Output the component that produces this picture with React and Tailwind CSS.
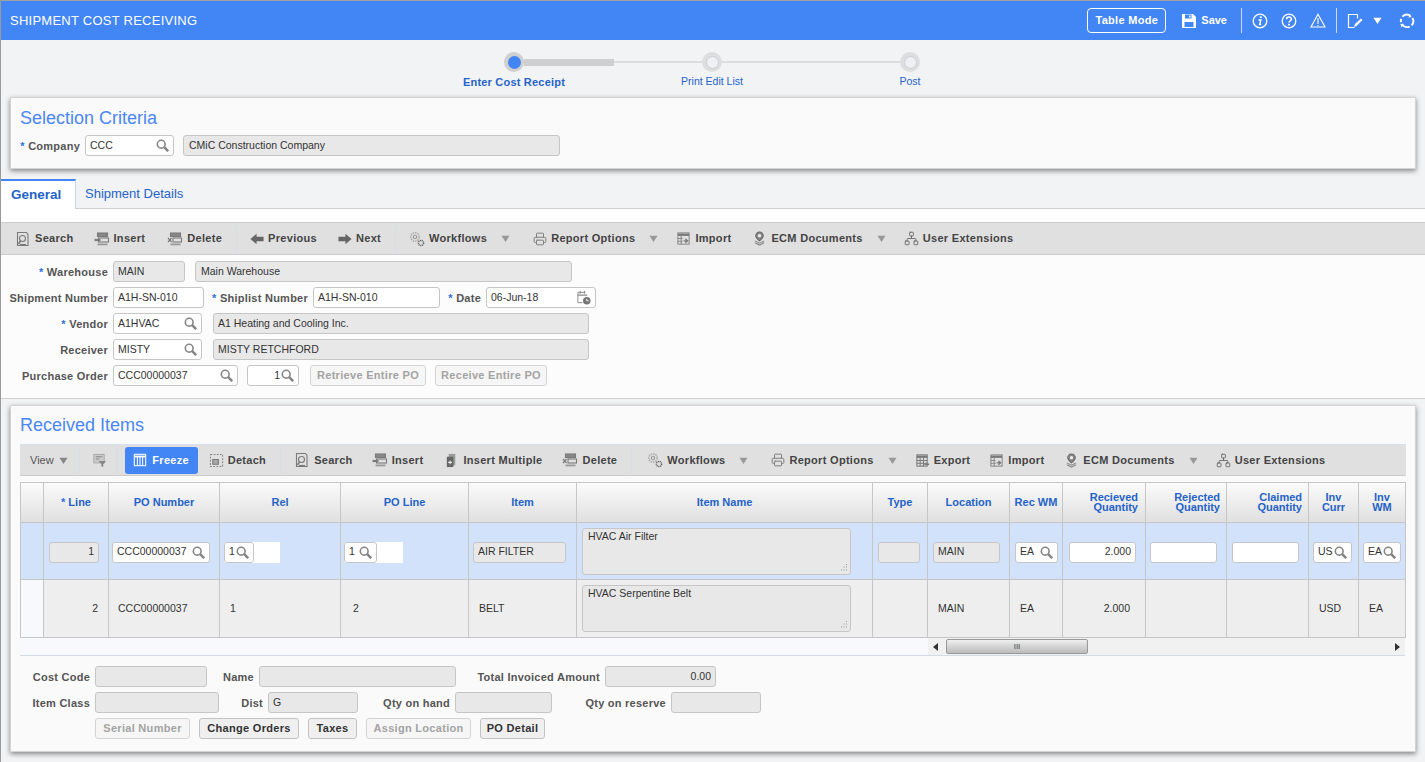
import { Printer, Network } from "lucide-react";

const gray = "#7a7a7a";

function Glyph({ size = 16, children }) {
  return (
    <svg width={size} height={size} viewBox="0 0 16 16" fill="none" stroke={gray} strokeWidth="1.1" className="shrink-0">
      {children}
    </svg>
  );
}

// toolbar icons
const icons = {
  search: (
    <Glyph>
      <path d="M2.5 1.5h9l1.5 2v11H2.5z" />
      <circle cx="7.5" cy="7.5" r="3" />
      <path d="M5.5 10 3.5 13" strokeWidth="1.6" />
      <path d="M5 13.5h6" />
    </Glyph>
  ),
  insert: (
    <Glyph>
      <rect x="3.5" y="2" width="10" height="3.5" fill="#888" />
      <rect x="4.5" y="7" width="10" height="4" />
      <path d="M0.5 9h6" strokeWidth="2.2" />
      <rect x="3.5" y="12.5" width="10" height="1.8" fill="#999" stroke="none" />
    </Glyph>
  ),
  delete: (
    <Glyph>
      <rect x="3.5" y="2" width="10" height="3.5" fill="#888" />
      <rect x="6" y="7" width="8.5" height="4" />
      <path d="m1 7 3.5 4m0-4-3.5 4" strokeWidth="1.2" />
      <rect x="3.5" y="12.5" width="10" height="1.8" fill="#999" stroke="none" />
    </Glyph>
  ),
  prev: (
    <Glyph size={14}>
      <path d="M0.5 8 7.5 2V5.5H15.5v5H7.5V14z" fill="#666" stroke="none" />
    </Glyph>
  ),
  next: (
    <Glyph size={14}>
      <path d="M15.5 8 8.5 2V5.5H0.5v5h8V14z" fill="#666" stroke="none" />
    </Glyph>
  ),
  workflows: (
    <Glyph>
      <circle cx="6" cy="6" r="4.2" strokeDasharray="1.6 .8" strokeWidth="1.5" stroke="#aaa" />
      <circle cx="6" cy="6" r="1.7" stroke="#999" />
      <circle cx="12" cy="12" r="2.6" strokeDasharray="1.2 .6" strokeWidth="1.5" stroke="#666" />
    </Glyph>
  ),
  print: <Printer size={14} color="#808080" strokeWidth={1.7} className="shrink-0" />,
  import: (
    <Glyph size={15}>
      <rect x="2" y="2" width="12" height="12" stroke="#888" />
      <path d="M2 4h12" strokeWidth="2.4" stroke="#777" />
      <path d="M5.5 5v9M2 8h5M2 11h5" stroke="#888" />
      <path d="M8 10.5h4m-2-2 2.5 2-2.5 2" strokeWidth="1.3" />
    </Glyph>
  ),
  export: (
    <Glyph size={15}>
      <rect x="2" y="2" width="11" height="12" stroke="#777" />
      <path d="M2 4h11" strokeWidth="2.4" stroke="#777" />
      <path d="M5.5 5v9M9 5v9M2 8h11M2 11h11" />
      <path d="M10 12h5" strokeWidth="1.8" />
    </Glyph>
  ),
  ecm: (
    <Glyph size={15}>
      <path d="M8 10.5C5 8 4 6.8 4 5a4 4 0 0 1 8 0c0 1.8-1 3-4 5.5z" fill="#888" stroke="#666" />
      <circle cx="8" cy="5" r="1.7" fill="#eee" stroke="none" />
      <path d="M3 10.5 8 13l5-2.5M3 12.5 8 15l5-2.5" stroke="#888" />
    </Glyph>
  ),
  users: <Network size={15} color="#666" strokeWidth={1.4} className="shrink-0" />,
  filter: (
    <Glyph size={15}>
      <rect x="2" y="1.5" width="11" height="9" fill="#ccc" stroke="#aaa" />
      <path d="M4 4h7M4 6.5h4" stroke="#888" />
      <path d="M7 8.5h8l-3 3.5v3l-2-1v-2z" fill="#888" stroke="none" />
    </Glyph>
  ),
  freeze: (
    <svg width="14" height="14" viewBox="0 0 16 16" fill="none" stroke="#fff" strokeWidth="1.2" className="shrink-0">
      <rect x="1.5" y="1.5" width="13" height="13" />
      <path d="M1.5 4h13" strokeWidth="2" />
      <path d="M5 4v10M8 4v10M11 4v10" />
    </svg>
  ),
  detach: (
    <Glyph size={15}>
      <rect x="1.5" y="1.5" width="13" height="13" strokeDasharray="2 1.4" stroke="#888" />
      <rect x="4" y="7" width="6" height="5" fill="#aaa" stroke="#777" />
    </Glyph>
  ),
  multi: (
    <Glyph size={15}>
      <path d="M5 1h7v12H5z" fill="#999" stroke="none" />
      <path d="M3 4h7v11H3z" fill="#666" stroke="none" />
      <path d="M6.5 8v4M4.5 10h4" stroke="#eee" />
    </Glyph>
  ),
};

function Caret({ color = "#999", size = 9 }) {
  return (
    <svg width={size} height={size} viewBox="0 0 10 10" className="shrink-0">
      <path d="M0.5 2h9L5 9z" fill={color} />
    </svg>
  );
}

function Tool({ icon, label, ml = "" }) {
  return (
    <div className={`flex items-center gap-[4px] text-[11px] font-bold tracking-[0.3px] text-[#444] whitespace-nowrap ${ml}`}>
      {icons[icon]}
      <span>{label}</span>
    </div>
  );
}

function Sep() {
  return <div className="w-px h-[26px] bg-[#d6dde6] shrink-0" />;
}

function Mag() {
  return (
    <svg width="13" height="13" viewBox="0 0 13 13" fill="none" stroke="#858585" className="shrink-0">
      <circle cx="5.2" cy="5.2" r="3.9" strokeWidth="1.6" />
      <path d="m8.2 8.2 4 4" strokeWidth="2.5" />
    </svg>
  );
}

function Field({ w, value = "", ro, search, right, children }) {
  return (
    <div
      className={`${w} h-[21px] shrink-0 flex items-center gap-[1px] rounded-[3px] border border-[#c6c6c6] pl-[4px] pr-[4px] text-[10.5px] text-[#333] whitespace-nowrap overflow-hidden ${ro ? "bg-[#e8e8e8]" : "bg-white"}`}
    >
      <span className={`flex-1 min-w-0 overflow-hidden ${right ? "text-right" : ""}`}>{value}</span>
      {search && <Mag />}
      {children}
    </div>
  );
}

function Label({ w, star, children }) {
  return (
    <div className={`${w} shrink-0 pt-[2px] text-right text-[11px] font-bold tracking-[0.25px] text-[#555] whitespace-nowrap`}>
      {star && <span className="text-[#2f6fdc]">* </span>}
      {children}
    </div>
  );
}

function Btn({ w, on, children }) {
  return (
    <div
      className={`${w} h-[21px] shrink-0 flex items-center justify-center rounded-[3px] border text-[11px] font-bold tracking-[0.3px] whitespace-nowrap ${
        on ? "border-[#c2c2c2] bg-[#efefef] text-[#333]" : "border-[#d4d4d4] bg-[#f6f6f6] text-[#a3a3a3]"
      }`}
    >
      {children}
    </div>
  );
}

const cols = [23, 65, 111, 121, 128, 108, 296, 55, 82, 53, 83, 81, 82, 50, 47];

const heads = [
  "",
  <><span className="text-[#2f6fdc]">* </span>Line</>,
  "PO Number",
  "Rel",
  "PO Line",
  "Item",
  "Item Name",
  "Type",
  "Location",
  "Rec WM",
  <div className="text-right pr-[3px]">Recieved<br />Quantity</div>,
  <div className="text-right pr-[2px]">Rejected<br />Quantity</div>,
  <div className="text-right pr-[2px]">Claimed<br />Quantity</div>,
  <>Inv<br />Curr</>,
  <>Inv<br />WM</>,
];

function Cell({ children, cls = "", freeze }) {
  return (
    <td className={`border border-[#c6c6c6] px-[5px] p-0 ${freeze ? "border-l-[#4a7fd8]" : ""} ${cls}`}>{children}</td>
  );
}

function TextArea({ value }) {
  return (
    <div className="relative w-[269px] h-[47px] rounded-[3px] border border-[#c6c6c6] bg-[#e8e8e8] px-[5px] text-[10.5px] text-[#333]">
      {value}
      <svg width="9" height="9" viewBox="0 0 9 9" className="absolute right-[2px] bottom-[2px]">
        <path d="M7.5 1v1M5 3.5v1M7.5 3.5v1M2.5 6.5v1M5 6.5v1M7.5 6.5v1" stroke="#999" />
      </svg>
    </div>
  );
}

function StepDot({ active }) {
  return (
    <div className={`w-5 h-5 shrink-0 rounded-full flex items-center justify-center ${active ? "bg-[#d0d0d0]" : "bg-[#dedede]"}`}>
      <div className={`w-[13px] h-[13px] rounded-full ${active ? "bg-[#4285f4]" : "bg-[#eef0f3] border border-[#c8ced8]"}`} />
    </div>
  );
}

export default function App() {
  return (
    <div className="w-[1425px] h-[762px] overflow-hidden bg-[#f2f3f5] border-l border-[#9a9a9a] font-['Liberation_Sans',Arial,sans-serif]">
      {/* Header */}
      <div className="h-[40px] border-t border-[#a0a0a0] bg-[#4285f4] flex items-center pl-[9px] text-white">
        <div className="text-[13px] tracking-[0.25px]">SHIPMENT COST RECEIVING</div>
        <div className="ml-auto flex items-center pr-[10px]">
          <div className="w-[79px] h-[25px] flex items-center justify-center rounded-[4px] border border-white text-[11px] font-bold tracking-[0.3px]">
            Table Mode
          </div>
          <svg width="16" height="16" viewBox="0 0 16 16" className="ml-[15px]">
            <path d="M1 1h11l3 3v11H1z" fill="#fff" />
            <path d="M4 1.5h6.5v4H4z" fill="#4285f4" />
            <path d="M8 2.5h1.5v2H8z" fill="#fff" />
            <path d="M3.5 9h9v5h-9z" fill="#4285f4" />
          </svg>
          <div className="ml-[4px] text-[11px] font-bold">Save</div>
          <div className="ml-[14px] w-px h-[25px] bg-[#c9dbfb]" />
          <svg width="16" height="16" viewBox="0 0 16 16" fill="none" stroke="#fff" className="ml-[10px]">
            <circle cx="8" cy="8" r="6.8" strokeWidth="1.3" />
            <path d="M8.8 3.4v1.6" strokeWidth="2" />
            <path d="M6.6 7h2.2l-1.1 4.6h1.5" strokeWidth="1.5" />
          </svg>
          <svg width="16" height="16" viewBox="0 0 16 16" fill="none" stroke="#fff" className="ml-[13px]">
            <circle cx="8" cy="8" r="6.8" strokeWidth="1.3" />
            <path d="M5.6 6.2C5.7 3.4 10.4 3.4 10.4 6c0 1.8-2.4 1.8-2.4 3.6" strokeWidth="1.6" />
            <path d="M8 10.8v1.7" strokeWidth="1.8" />
          </svg>
          <svg width="16" height="15" viewBox="0 0 16 15" fill="none" stroke="#fff" strokeWidth="1.1" className="ml-[13px]">
            <path d="M8 1.2 15 14H1z" />
            <path d="M8 5v6" />
            <path d="M8 12v1" />
          </svg>
          <div className="ml-[10px] w-px h-[25px] bg-[#c9dbfb]" />
          <svg width="16" height="16" viewBox="0 0 16 16" fill="none" stroke="#fff" className="ml-[10px]">
            <path d="M10.5 1.5H1.5v13h6" strokeWidth="1.2" />
            <path d="M10.5 1.5v4" strokeWidth="1.2" />
            <path d="m7 14 1-3 6-5.5 1.5 1.5L9.5 13z" fill="#fff" stroke="none" />
          </svg>
          <div className="ml-[10px]">
            <Caret color="#fff" size={9} />
          </div>
          <svg width="16" height="16" viewBox="0 0 16 16" fill="none" stroke="#fff" strokeWidth="2" className="ml-[17px]">
            <path d="M3.4 3.6A6.2 6.2 0 0 1 11 2.6" />
            <path d="M13.4 5a6.2 6.2 0 0 1-.8 7.4" />
            <path d="M10.6 13.6A6.2 6.2 0 0 1 3 11.2" />
            <path d="M2 9.2a6.2 6.2 0 0 1 .2-3.4" />
            <path d="M11 1l1.6 3L9.4 4.4z" fill="#fff" stroke="none" />
            <path d="M2.6 14.6 1.4 11l3.4-.2z" fill="#fff" stroke="none" />
          </svg>
        </div>
      </div>

      {/* Wizard */}
      <div className="h-[57px] pl-[503px] pt-[12px]">
        <div className="flex items-center w-[416px]">
          <StepDot active />
          <div className="w-[90px] h-[7px] bg-[#cfcfcf]" />
          <div className="w-[88px] h-[2px] bg-[#dcdcdc]" />
          <StepDot />
          <div className="w-[178px] h-[2px] bg-[#dcdcdc]" />
          <StepDot />
        </div>
        <div className="-ml-[89px] mt-[2px] grid grid-cols-[198px_198px_198px] text-center text-[10.5px] text-[#2563c9]">
          <div className="font-bold text-[11px] tracking-[0.2px]">Enter Cost Receipt</div>
          <div>Print Edit List</div>
          <div>Post</div>
        </div>
      </div>

      {/* Selection Criteria */}
      <div className="mx-[9px] h-[72px] border border-[#d4d4d4] bg-[#fafafa] shadow-[0_2px_5px_rgba(0,0,0,0.45)] pl-[9px] pt-[9px]">
        <div className="text-[18px] leading-[22px] text-[#4a86f7]">Selection Criteria</div>
        <div className="mt-[6px] flex items-center">
          <Label w="w-[60px]" star>Company</Label>
          <div className="w-[5px]" />
          <Field w="w-[89px]" value="CCC" search />
          <div className="w-[9px]" />
          <Field w="w-[377px] !pl-[5px]" value="CMiC Construction Company" ro />
        </div>
      </div>

      {/* Tabs */}
      <div className="mt-[10px] h-[30px] flex border-b border-[#cfcfcf] text-[13px]">
        <div className="w-[75px] h-[30px] border-t-2 border-r border-t-[#4285f4] border-r-[#c9d6ea] bg-white flex items-center pl-[10px] text-[13.5px] font-bold text-[#2563c9]">
          General
        </div>
        <div className="pl-[9px] flex items-center text-[#2563c9]">Shipment Details</div>
      </div>
      <div className="h-[13px] bg-white" />

      {/* Main toolbar */}
      <div className="h-[33px] pl-[14px] flex items-center border-y border-[#cdcdcd] bg-[#e0e0e0]">
        <Tool icon="search" label="Search" />
        <Tool icon="insert" label="Insert" ml="ml-[20px]" />
        <Tool icon="delete" label="Delete" ml="ml-[22px]" />
        <div className="ml-[14px]"><Sep /></div>
        <Tool icon="prev" label="Previous" ml="ml-[13px]" />
        <Tool icon="next" label="Next" ml="ml-[21px]" />
        <div className="ml-[14px]"><Sep /></div>
        <Tool icon="workflows" label="Workflows" ml="ml-[13px]" />
        <div className="ml-[14px]"><Caret /></div>
        <Tool icon="print" label="Report Options" ml="ml-[23px]" />
        <div className="ml-[14px]"><Caret /></div>
        <Tool icon="import" label="Import" ml="ml-[18px]" />
        <Tool icon="ecm" label="ECM Documents" ml="ml-[21px]" />
        <div className="ml-[14px]"><Caret /></div>
        <Tool icon="users" label="User Extensions" ml="ml-[18px]" />
      </div>

      {/* Shipment form */}
      <div className="h-[144px] bg-[#fcfcfc] border-b border-[#cfcfcf] pt-[6px] flex flex-col gap-[5px]">
        <div className="flex items-center gap-[5px]">
          <Label w="w-[107px]" star>Warehouse</Label>
          <Field w="w-[72px]" value="MAIN" ro />
          <Field w="w-[377px] ml-[5px] !pl-[5px]" value="Main Warehouse" ro />
        </div>
        <div className="flex items-center gap-[5px]">
          <Label w="w-[107px]">Shipment Number</Label>
          <Field w="w-[91px]" value="A1H-SN-010" />
          <Label w="w-[99px]" star>Shiplist Number</Label>
          <Field w="w-[127px]" value="A1H-SN-010" />
          <Label w="w-[36px]" star>Date</Label>
          <Field w="w-[110px]" value="06-Jun-18">
            <svg width="15" height="15" viewBox="0 0 16 16" fill="none" stroke="#888" className="shrink-0">
              <path d="M10 2.5h-8v11h5" />
              <path d="M2 5.5h10" strokeWidth="1.5" />
              <path d="M4.5 1v3M9 1v3" />
              <circle cx="11.5" cy="11.5" r="4" fill="#777" stroke="none" />
              <path d="M11.5 9.5v2h2" stroke="#fff" />
            </svg>
          </Field>
        </div>
        <div className="flex items-center gap-[5px]">
          <Label w="w-[107px]" star>Vendor</Label>
          <Field w="w-[89px]" value="A1HVAC" search />
          <Field w="w-[376px] ml-[6px]" value="A1 Heating and Cooling Inc." ro />
        </div>
        <div className="flex items-center gap-[5px]">
          <Label w="w-[107px]">Receiver</Label>
          <Field w="w-[89px]" value="MISTY" search />
          <Field w="w-[376px] ml-[6px]" value="MISTY RETCHFORD" ro />
        </div>
        <div className="flex items-center gap-[5px]">
          <Label w="w-[107px]">Purchase Order</Label>
          <Field w="w-[125px]" value="CCC00000037" search />
          <Field w="w-[52px] ml-[4px]" value="1" search right />
          <Btn w="w-[116px] ml-[6px]">Retrieve Entire PO</Btn>
          <Btn w="w-[112px] ml-[4px]">Receive Entire PO</Btn>
        </div>
      </div>

      {/* Received Items */}
      <div className="mt-[6px] mx-[9px] h-[347px] border border-[#d4d4d4] bg-[#fafafa] shadow-[0_2px_5px_rgba(0,0,0,0.45)] px-[9px] pt-[8px]">
        <div className="text-[18px] leading-[22px] text-[#4a86f7]">Received Items</div>

        <div className="mt-[8px] h-[32px] pl-[10px] flex items-center border-t border-b border-t-[#d4e0f2] border-b-[#cdcdcd] bg-[#e0e0e0]">
          <div className="flex items-center gap-[5px] text-[11px] text-[#555]">
            View <Caret color="#888" />
          </div>
          <div className="ml-[11px]"><Sep /></div>
          <div className="ml-[12px]">{icons.filter}</div>
          <div className="ml-[10px]"><Sep /></div>
          <div className="ml-[7px] w-[73px] h-[27px] flex items-center justify-center rounded-[3px] bg-[#4285f4]">
            <div className="flex items-center gap-[5px] text-[11px] font-bold tracking-[0.3px] text-white">
              {icons.freeze}
              Freeze
            </div>
          </div>
          <Tool icon="detach" label="Detach" ml="ml-[11px]" />
          <div className="ml-[14px]"><Sep /></div>
          <Tool icon="search" label="Search" ml="ml-[13px]" />
          <Tool icon="insert" label="Insert" ml="ml-[19px]" />
          <Tool icon="multi" label="Insert Multiple" ml="ml-[21px]" />
          <Tool icon="delete" label="Delete" ml="ml-[20px]" />
          <div className="ml-[14px]"><Sep /></div>
          <Tool icon="workflows" label="Workflows" ml="ml-[15px]" />
          <div className="ml-[14px]"><Caret /></div>
          <Tool icon="print" label="Report Options" ml="ml-[23px]" />
          <div className="ml-[14px]"><Caret /></div>
          <Tool icon="export" label="Export" ml="ml-[18px]" />
          <Tool icon="import" label="Import" ml="ml-[19px]" />
          <Tool icon="ecm" label="ECM Documents" ml="ml-[20px]" />
          <div className="ml-[14px]"><Caret /></div>
          <Tool icon="users" label="User Extensions" ml="ml-[18px]" />
        </div>

        {/* Grid */}
        <table className="mt-[6px] w-[1385px] table-fixed border-collapse text-[10.5px] text-[#333]">
          <colgroup>
            {cols.map((w, i) => (
              <col key={i} style={{ width: w }} />
            ))}
          </colgroup>
          <thead>
            <tr className="h-[40px] bg-gradient-to-b from-[#fbfbfb] to-[#dfdfdf]">
              {heads.map((h, i) => (
                <th
                  key={i}
                  className={`border border-[#c6c6c6] px-[4px] pb-[2px] text-center text-[11px] font-bold leading-[10px] text-[#2563c9] ${i === 8 ? "border-l-[#4a7fd8]" : ""}`}
                >
                  {h}
                </th>
              ))}
            </tr>
          </thead>
          <tbody>
            <tr className="h-[57px] bg-[#d2e2fa]">
              <Cell />
              <Cell cls="pt-[2px]"><Field w="w-[50px]" value="1" ro right /></Cell>
              <Cell cls="pt-[2px] !pl-[3px]"><Field w="w-[98px]" value="CCC00000037" search /></Cell>
              <Cell cls="pt-[2px] !pl-[4px]">
                <div className="flex w-[56px] h-[21px] rounded-l-[3px] bg-white">
                  <Field w="w-[30px]" value="1" search />
                </div>
              </Cell>
              <Cell cls="pt-[2px] !pl-[3px]">
                <div className="flex w-[59px] h-[21px] rounded-l-[3px] bg-white">
                  <Field w="w-[33px]" value="1" search />
                </div>
              </Cell>
              <Cell cls="pt-[2px] !pl-[4px]"><Field w="w-[93px]" value="AIR FILTER" ro /></Cell>
              <Cell><TextArea value="HVAC Air Filter" /></Cell>
              <Cell cls="pt-[2px]"><Field w="w-[42px]" ro /></Cell>
              <Cell freeze cls="pt-[2px]"><Field w="w-[67px]" value="MAIN" ro /></Cell>
              <Cell cls="pt-[2px]"><Field w="w-[43px]" value="EA" search /></Cell>
              <Cell cls="pt-[2px] !pl-[6px]"><Field w="w-[67px]" value="2.000" right /></Cell>
              <Cell cls="pt-[2px] !pl-[4px]"><Field w="w-[67px]" /></Cell>
              <Cell cls="pt-[2px]"><Field w="w-[67px]" /></Cell>
              <Cell cls="pt-[2px] !pl-[4px]"><Field w="w-[39px]" value="USD" search /></Cell>
              <Cell cls="pt-[2px] !pl-[4px]"><Field w="w-[38px]" value="EA" search /></Cell>
            </tr>
            <tr className="h-[58px] bg-[#eeeeee]">
              <Cell cls="bg-[#f7f9fd]" />
              <Cell cls="text-right !pr-[10px]">2</Cell>
              <Cell cls="!pl-[9px]">CCC00000037</Cell>
              <Cell cls="!pl-[10px]">1</Cell>
              <Cell cls="!pl-[12px]">2</Cell>
              <Cell cls="!pl-[10px]">BELT</Cell>
              <Cell><TextArea value="HVAC Serpentine Belt" /></Cell>
              <Cell />
              <Cell freeze cls="!pl-[10px]">MAIN</Cell>
              <Cell cls="!pl-[10px]">EA</Cell>
              <Cell cls="text-right !pr-[15px]">2.000</Cell>
              <Cell />
              <Cell />
              <Cell cls="!pl-[10px]">USD</Cell>
              <Cell cls="!pl-[10px]">EA</Cell>
            </tr>
          </tbody>
        </table>

        {/* Horizontal scrollbar */}
        <div className="h-[18px] w-[1385px] flex bg-[#f7f9fd] border-b border-[#d5dbe4]">
          <div className="w-[908px] shrink-0" />
          <div className="flex-1 flex items-center bg-[#f1f1f1] pl-[5px] pr-[5px]">
            <svg width="5" height="8" viewBox="0 0 5 8" className="shrink-0"><path d="M5 0v8L0 4z" fill="#333" /></svg>
            <div className="ml-[8px] w-[142px] h-[15px] shrink-0 flex items-center justify-center border border-[#999] rounded-[2px] bg-gradient-to-b from-[#f0f0f0] via-[#d4d4d4] to-[#bcbcbc] text-[8px] text-[#444]">
              III
            </div>
            <svg width="5" height="8" viewBox="0 0 5 8" className="ml-auto shrink-0"><path d="M0 0v8l5-4z" fill="#333" /></svg>
          </div>
        </div>

        {/* Bottom form */}
        <div className="mt-[10px] flex flex-col gap-[5px]">
          <div className="flex items-center gap-[5px]">
            <Label w="w-[70px]">Cost Code</Label>
            <Field w="w-[112px]" ro />
            <Label w="w-[42px]">Name</Label>
            <Field w="w-[197px]" ro />
            <Label w="w-[139px]">Total Invoiced Amount</Label>
            <Field w="w-[111px]" value="0.00" ro right />
          </div>
          <div className="flex items-center gap-[5px]">
            <Label w="w-[70px]">Item Class</Label>
            <Field w="w-[124px]" ro />
            <Label w="w-[39px]">Dist</Label>
            <Field w="w-[90px]" value="G" ro />
            <Label w="w-[87px]">Qty on hand</Label>
            <Field w="w-[97px]" ro />
            <Label w="w-[109px]">Qty on reserve</Label>
            <Field w="w-[90px]" ro />
          </div>
          <div className="pl-[75px] flex items-center gap-[9px]">
            <Btn w="w-[95px]">Serial Number</Btn>
            <Btn w="w-[100px]" on>Change Orders</Btn>
            <Btn w="w-[49px]" on>Taxes</Btn>
            <Btn w="w-[105px]">Assign Location</Btn>
            <Btn w="w-[65px]" on>PO Detail</Btn>
          </div>
        </div>
      </div>
    </div>
  );
}
